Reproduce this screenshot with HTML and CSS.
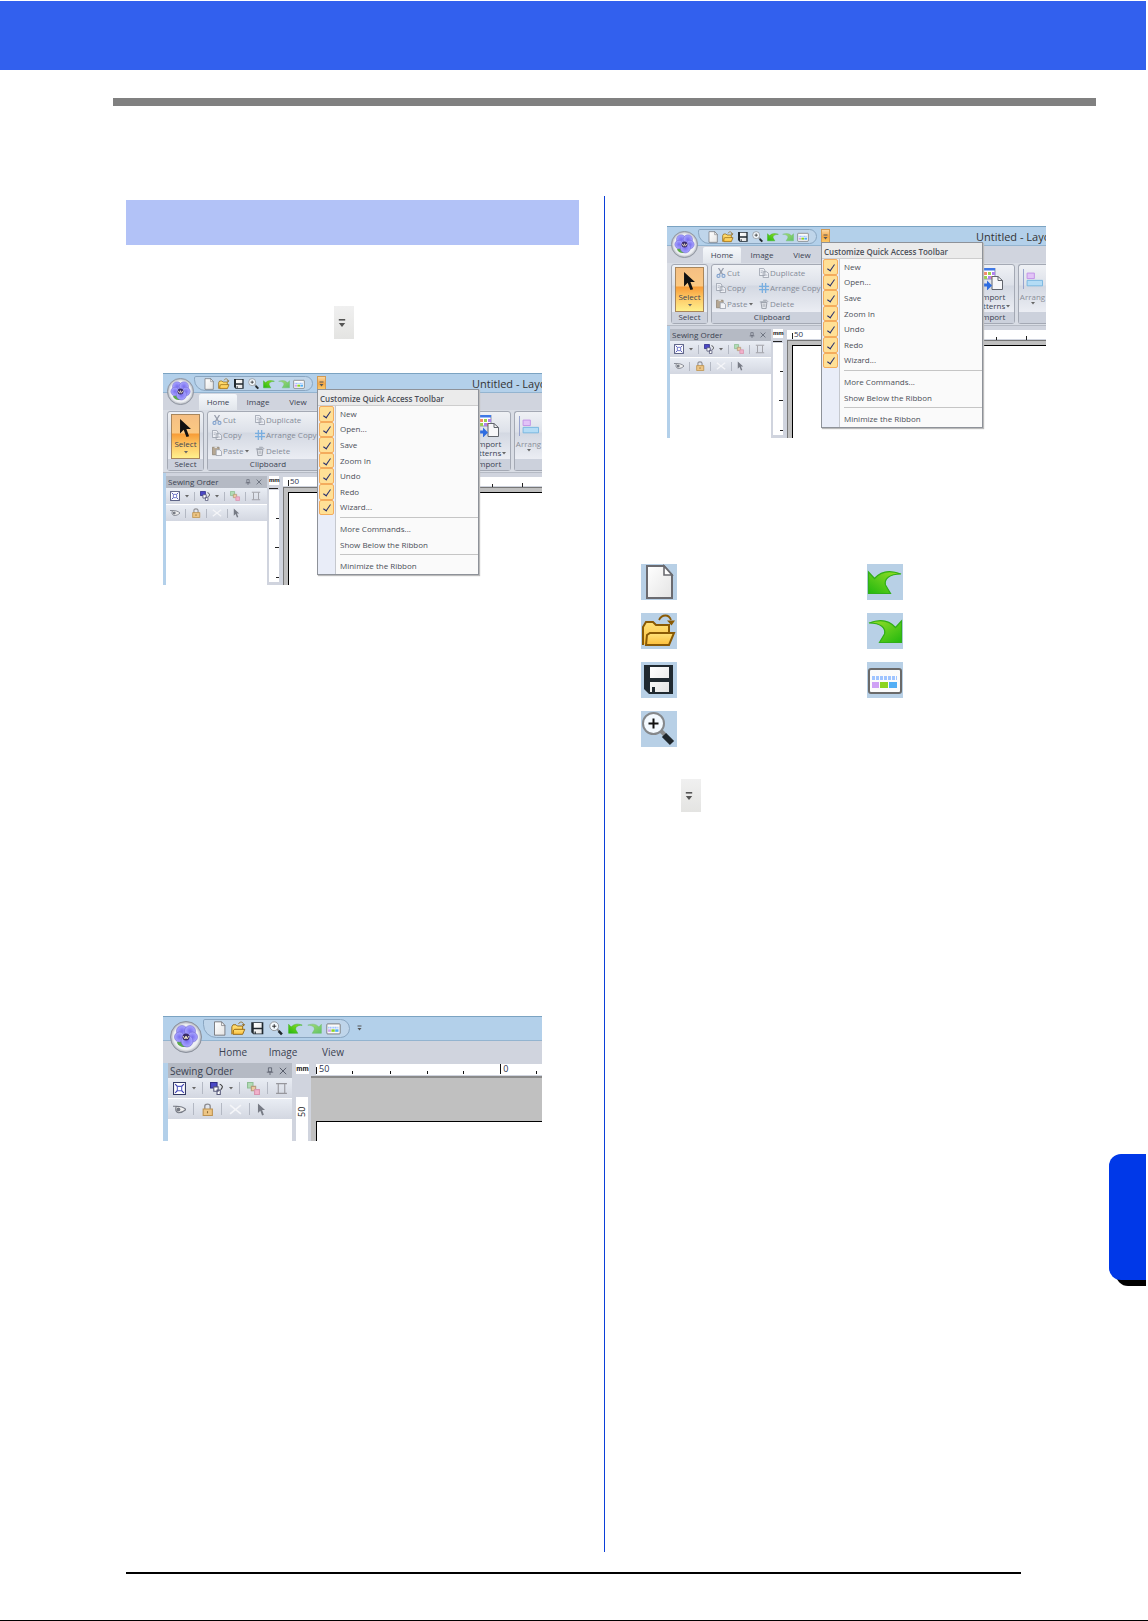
FILE: index.html
```
<!DOCTYPE html>
<html lang="en">
<head>
<meta charset="utf-8">
<title>Quick Access Toolbar</title>
<link rel="stylesheet" href="styles.css">
</head>
<body>
<svg class="defs" aria-hidden="true">
  <defs>
    <linearGradient id="g-doc" x1="0" y1="0" x2="1" y2="1"><stop offset="0" stop-color="#fff"/><stop offset="1" stop-color="#e4e4e4"/></linearGradient>
    <linearGradient id="g-fold" x1="0" y1="0" x2="0" y2="1"><stop offset="0" stop-color="#ffe27a"/><stop offset="1" stop-color="#fcbf3c"/></linearGradient>
    <linearGradient id="g-green" x1="0" y1="1" x2="1" y2="0"><stop offset="0" stop-color="#22b80e"/><stop offset="1" stop-color="#9be02a"/></linearGradient>
    <radialGradient id="g-orb"><stop offset="0" stop-color="#fff"/><stop offset=".8" stop-color="#eceef2"/><stop offset="1" stop-color="#a9adb5"/></radialGradient>
    <radialGradient id="g-petal"><stop offset="0" stop-color="#7a6ff0"/><stop offset="1" stop-color="#a9a6ff"/></radialGradient>
  </defs>
  <symbol id="new" viewBox="0 0 36 36"><path d="M6 2h17l8 9v23H6z" fill="url(#g-doc)" stroke="#6b6b70" stroke-width="2"/><path d="M23 2v9h8z" fill="#fff" stroke="#6b6b70" stroke-width="1.6"/></symbol>
  <symbol id="open" viewBox="0 0 36 36"><path d="M2 32V14l3-5h7l3 3h13v10" fill="url(#g-fold)" stroke="#8a5a05" stroke-width="2"/><path d="M5 32 6 22l3-2h24l-5 12z" fill="url(#g-fold)" stroke="#8a5a05" stroke-width="2"/><path d="M18 7c3-6 10-6 12 0" fill="none" stroke="#8a5a05" stroke-width="1.8"/><path d="M26 7.500h8l-3.500 5z" fill="#8a5a05"/></symbol>
  <symbol id="save" viewBox="0 0 36 36"><path d="M3 3h29v29H8l-5-5z" fill="#202930"/><path d="M9 5h19v11H9zM9 20h19v10H9z" fill="url(#g-doc)"/><path d="M11 25h3v6h-3z" fill="#202930"/></symbol>
  <symbol id="zoom" viewBox="0 0 36 36"><path d="m19 19 5 5" stroke="#8b8b8b" stroke-width="4"/><path d="m23 24 8 8" stroke="#20272c" stroke-width="6"/><circle cx="12.500" cy="12.500" r="10.500" fill="#f4faff" stroke="#85888b" stroke-width="2"/><path d="M12.500 7.500v10M7.500 12.500h10" stroke="#111" stroke-width="2"/></symbol>
  <symbol id="undo" viewBox="0 0 36 36"><path d="m1.500 8 6 6.500c6-7 15-9 26.500-4.500-12 0-17 5-15.500 11l5 8.500h-22z" fill="url(#g-green)" stroke="#31ae18" stroke-width="1.200"/></symbol>
  <symbol id="redo" viewBox="0 0 36 36"><path transform="matrix(-1 0 0 1 36 0)" d="m1.500 8 6 6.500c6-7 15-9 26.500-4.500-12 0-17 5-15.500 11l5 8.500h-22z" fill="url(#g-green)" stroke="#31ae18" stroke-width="1.200"/></symbol>
  <symbol id="wizard" viewBox="0 0 36 36"><rect x="2" y="7" width="32" height="24" rx="2" fill="#fbfbfb" stroke="#6a6a6a" stroke-width="2"/><path d="M5 16h25" stroke="#9fc4ff" stroke-width="4" stroke-dasharray="3 1"/><path d="M5 20h7v6H5z" fill="#cfa0f5"/><path d="M13 20h8v6h-8z" fill="#8cd420"/><path d="M22 20h8v6h-8z" fill="#52aef5"/></symbol>
  <symbol id="orb" viewBox="0 0 32 32"><circle cx="16" cy="16" r="15.500" fill="url(#g-orb)" stroke="#8b919c"/><path d="M7 21c1 5 7 6 12 4l-6-5z" fill="#5cab48"/><g fill="url(#g-petal)" stroke="#6558c8" stroke-width=".5"><circle cx="12" cy="10" r="5.500"/><circle cx="20" cy="10" r="5.500"/><circle cx="22.500" cy="16" r="5"/><circle cx="9.500" cy="16" r="5"/><circle cx="17" cy="20" r="6"/></g><circle cx="16" cy="16" r="3.500" fill="#382a66"/><path d="m13 15 2 3 1-3 1 3 2-3" fill="none" stroke="#e8dfc0"/></symbol>
  <symbol id="drop" viewBox="0 0 10 12"><path d="M1 2h8" stroke="#555" stroke-width="2"/><path d="M1 6h8l-4 5z" fill="#555"/></symbol>
  <symbol id="caret" viewBox="0 0 6 4"><path d="M1 1h4L3 3.500z" fill="#666"/></symbol>
  <symbol id="cursor" viewBox="0 0 14 22"><path d="M1 1v16l4-4 3 8 3-1-3-8h5z" fill="currentColor"/></symbol>
  <symbol id="cut" viewBox="0 0 12 12"><path d="m3 0 5 8M9 0 4 8" stroke="#969cab" stroke-width="1.500"/><g fill="none" stroke="#84a4cf" stroke-width="1.400"><circle cx="3" cy="9.500" r="1.800"/><circle cx="9" cy="9.500" r="1.800"/></g></symbol>
  <symbol id="copy" viewBox="0 0 12 12"><path d="M.5.5h5l1.500 2V9H.5zM5 4.500h4l2.500 2v5H5z" fill="#eef0f5" stroke="#979daa"/><path d="M2 3.500h3M2 5.500h2M7 8.500h3" stroke="#aab0bd"/></symbol>
  <symbol id="paste" viewBox="0 0 12 12"><path d="M.5 1.500h8v9h-8z" fill="#b6a793" stroke="#928777"/><path d="M3 .5h3v2H3z" fill="#ddd"/><path d="M5 4.500h4l2.500 2v5H5z" fill="#f2f3f7" stroke="#979daa"/></symbol>
  <symbol id="arrange" viewBox="0 0 12 12"><path d="M4 0v12M8 0v12M0 4h12M0 8h12" stroke="#78aee0" stroke-width="1.500"/></symbol>
  <symbol id="delete" viewBox="0 0 12 12"><path d="M2.500 4h7l-1 7.500h-5zM1 3.500h8M5 1.500h4l2 2" fill="#e6e8ed" stroke="#8f949f"/><path d="M5 5.500v4M7 5.500v4" stroke="#a5a9b2"/></symbol>
  <symbol id="pin" viewBox="0 0 10 10"><path d="M3 1h4v5H3zM1 6.500h8M5 7v3" fill="none" stroke="#555b68"/></symbol>
  <symbol id="close" viewBox="0 0 10 10"><path d="m1 1 8 8M9 1 1 9" stroke="#555b68" stroke-width="1.200"/></symbol>
  <symbol id="fit" viewBox="0 0 12 12"><path d="M.5.5h11v11H.5z" fill="#fff" stroke="#333a66"/><path d="m2 2 2 2M10 2 8 4M2 10l2-2M10 10 8 8" stroke="#3636ad"/><path d="M4 4h4v4H4z" fill="#fff" stroke="#555ec2"/></symbol>
  <symbol id="order" viewBox="0 0 12 12"><path d="M.5.500h6v5h-6z" fill="#4b48c6" stroke="#2f2d87"/><path d="M3.500 4.500h4v4h-4zM6.500 7.500h3v4h-3z" fill="#fff" stroke="#57597a"/><path d="M9 2c3 1 3 3 1 5" fill="none" stroke="#333"/></symbol>
  <symbol id="merge" viewBox="0 0 12 12"><path d="M.5.500h5v5h-5z" fill="#b1dcb5" stroke="#8fbe94"/><path d="M4 4h4v4H4z" fill="#ecc9a0" stroke="#b79b7c"/><path d="M7 7h4.500v4.500H7z" fill="#f2b1cb" stroke="#d795b0"/></symbol>
  <symbol id="spool" viewBox="0 0 12 12"><path d="M1 1.500h10M1 10.500h10M3 2v8M9 2v8" stroke="#96969c"/></symbol>
  <symbol id="eye" viewBox="0 0 12 12"><path d="M0 3h3c4 0 7 1 9 3-2 2-4 3-7 3-3-1-3-3-2-6" fill="#eee" stroke="#777b85"/><circle cx="5" cy="6" r="1.800" fill="#777b85"/></symbol>
  <symbol id="lock" viewBox="0 0 12 12"><path d="M3.500 6V3q0-2 2.500-2t2.500 2v3" fill="none" stroke="#8e8e92" stroke-width="1.300"/><path d="M2 5.500h8.500v6H2z" fill="#edc584" stroke="#bd9351"/><path d="M6 7.500v2" stroke="#8f6e39"/></symbol>
  <symbol id="snip" viewBox="0 0 12 12"><path d="m1 2 10 8M11 2 1 10" stroke="#f4f5f8" stroke-width="1.500"/></symbol>
  <symbol id="import" viewBox="0 0 20 22"><path d="M0 0h12v11H0z" fill="#fff" stroke="#8b93ad"/><path d="M0 0h12v2.500H0z" fill="#3f78e6"/><path d="M1 4h3v3H1zM8 8h3v3H8z" fill="#f58a6a"/><path d="M5 4h3v3H5zM1 8h3v3H1z" fill="#9bd04e"/><path d="M9 4h3v3H9zM5 8h3v3H5z" fill="#b081ec"/><path d="M9 8.500h6l4.500 4v9H9z" fill="#f7f7f9" stroke="#61656d"/><path d="M15 8.500v4h4.500" fill="none" stroke="#61656d"/><path d="M0 15.500h4v-3l5 5-5 5v-4H0z" fill="#2e6ce0"/></symbol>
  <symbol id="align" viewBox="0 0 22 22"><path d="M.5 0v22" stroke="#8c99c9"/><path d="M4.500 4.500h8v6h-8z" fill="#e2c3f7" stroke="#c190e6"/><path d="M4.500 12.500h17v6h-17z" fill="#b4dcf5" stroke="#74b4df"/></symbol>
</svg>

<header class="banner"></header>
<div class="rule"></div>

<main class="page">
  <section class="column column-left">
    <div class="heading"></div>
    <button class="more more-first" aria-label="Customize"><svg><use href="#drop"/></svg></button>
    <div class="shot" data-window></div>

    <div class="shot shot-large">
      <div class="titlebar">
        <span class="orb"><svg><use href="#orb"/></svg></span>
        <div class="quick"><svg><use href="#new"/></svg><svg><use href="#open"/></svg><svg><use href="#save"/></svg><svg><use href="#zoom"/></svg><svg><use href="#undo"/></svg><svg class="faded"><use href="#redo"/></svg><svg><use href="#wizard"/></svg></div>
        <button class="customize plain" aria-label="Customize"><svg><use href="#drop"/></svg></button>
      </div>
      <nav class="tabs"><button>Home</button><button>Image</button><button>View</button></nav>
      <div class="work">
        <div class="panel">
          <div class="panel-head"><span>Sewing Order</span><svg><use href="#pin"/></svg><svg><use href="#close"/></svg></div>
          <div class="tools"><svg><use href="#fit"/></svg><svg class="caret"><use href="#caret"/></svg><i></i><svg><use href="#order"/></svg><svg class="caret"><use href="#caret"/></svg><i></i><svg><use href="#merge"/></svg><i></i><svg><use href="#spool"/></svg></div>
          <div class="tools"><svg><use href="#eye"/></svg><i></i><svg><use href="#lock"/></svg><i></i><svg><use href="#snip"/></svg><i></i><svg class="pointer"><use href="#cursor"/></svg></div>
        </div>
        <div class="side-ruler"><b>mm</b><span class="scale">50</span></div>
        <div class="stage">
          <div class="ruler"><span>50</span><span class="zero">0</span><svg class="ticks"><path d="M.5 3v7M36.500 7v3M74.500 7v3M111.500 7v3M147.500 7v3M220.500 7v3M184.500 0v10" stroke="#111"/></svg></div>
          <div class="canvas"><div class="paper"></div></div>
        </div>
      </div>
    </div>
  </section>

  <section class="column column-right">
    <div class="shot" data-window></div>
    <div class="icon-grid">
      <span class="tile"><svg><use href="#new"/></svg></span><span class="tile"><svg><use href="#undo"/></svg></span>
      <span class="tile"><svg><use href="#open"/></svg></span><span class="tile"><svg><use href="#redo"/></svg></span>
      <span class="tile"><svg><use href="#save"/></svg></span><span class="tile"><svg><use href="#wizard"/></svg></span>
      <span class="tile"><svg><use href="#zoom"/></svg></span>
    </div>
    <button class="more more-second" aria-label="Customize"><svg><use href="#drop"/></svg></button>
  </section>
</main>
<footer class="footer"></footer>
<div class="side-tab"></div>

<template id="window">
  <div class="titlebar">
    <span class="orb"><svg><use href="#orb"/></svg></span>
    <div class="quick"><svg><use href="#new"/></svg><svg><use href="#open"/></svg><svg><use href="#save"/></svg><svg><use href="#zoom"/></svg><svg><use href="#undo"/></svg><svg class="faded"><use href="#redo"/></svg><svg><use href="#wizard"/></svg></div>
    <button class="customize" aria-label="Customize"><svg><use href="#drop"/></svg></button>
    <span class="title">Untitled - Layo</span>
  </div>
  <nav class="tabs"><button class="active">Home</button><button>Image</button><button>View</button></nav>
  <div class="ribbon">
    <div class="group group-select">
      <button class="select"><svg class="arrow"><use href="#cursor"/></svg><span>Select</span><svg class="caret"><use href="#caret"/></svg></button>
      <div class="caption">Select</div>
    </div>
    <div class="group group-clip">
      <div class="commands">
        <button><svg><use href="#cut"/></svg>Cut</button><button><svg><use href="#copy"/></svg>Duplicate</button>
        <button><svg><use href="#copy"/></svg>Copy</button><button><svg><use href="#arrange"/></svg>Arrange Copy</button>
        <button><svg><use href="#paste"/></svg>Paste<svg class="caret"><use href="#caret"/></svg></button><button><svg><use href="#delete"/></svg>Delete</button>
      </div>
      <div class="caption">Clipboard</div>
    </div>
    <div class="group group-import">
      <button class="tall"><svg><use href="#import"/></svg><span>Import</span><span>Patterns<svg class="caret"><use href="#caret"/></svg></span></button>
      <div class="caption">Import</div>
    </div>
    <div class="group group-arrange">
      <button class="tall"><svg><use href="#align"/></svg><span>Arrang</span><svg class="caret"><use href="#caret"/></svg></button>
      <div class="caption"></div>
    </div>
  </div>
  <div class="work">
    <div class="panel">
      <div class="panel-head"><span>Sewing Order</span><svg><use href="#pin"/></svg><svg><use href="#close"/></svg></div>
      <div class="tools"><svg><use href="#fit"/></svg><svg class="caret"><use href="#caret"/></svg><i></i><svg><use href="#order"/></svg><svg class="caret"><use href="#caret"/></svg><i></i><svg><use href="#merge"/></svg><i></i><svg><use href="#spool"/></svg></div>
      <div class="tools"><svg><use href="#eye"/></svg><i></i><svg><use href="#lock"/></svg><i></i><svg><use href="#snip"/></svg><i></i><svg class="pointer"><use href="#cursor"/></svg></div>
    </div>
    <div class="side-ruler"><b>mm</b><svg class="marks"><path d="M0 3.500h9M7 33.500h3M6 62.500h4M7 92.500h3" stroke="#222"/></svg></div>
    <div class="stage">
      <div class="ruler"><span>50</span><svg class="ticks"><path d="M5.500 3v6M209.500 7v3M239.500 6v4" stroke="#222"/></svg></div>
      <div class="canvas"><div class="paper"></div></div>
    </div>
  </div>
  <div class="menu">
    <div class="menu-head">Customize Quick Access Toolbar</div>
    <label><input type="checkbox" checked>New</label>
    <label><input type="checkbox" checked>Open...</label>
    <label><input type="checkbox" checked>Save</label>
    <label><input type="checkbox" checked>Zoom In</label>
    <label><input type="checkbox" checked>Undo</label>
    <label><input type="checkbox" checked>Redo</label>
    <label><input type="checkbox" checked>Wizard...</label>
    <hr>
    <button>More Commands...</button>
    <button>Show Below the Ribbon</button>
    <hr>
    <button>Minimize the Ribbon</button>
  </div>
</template>
<script src="app.js"></script>
</body>
</html>
```
FILE: styles.css
```
* { box-sizing: border-box; }
body {
  margin: 0;
  min-height: 100vh;
  display: flex;
  flex-direction: column;
  position: relative;
  background: #fff;
  font-family: "Open Sans", "Noto Sans", sans-serif;
  overflow-x: hidden;
}
button { margin: 0; padding: 0; border: 0; background: none; font: inherit; color: inherit; }
svg { display: block; flex: none; }
.defs { position: absolute; width: 0; height: 0; }

.banner { height: 69px; margin: 1px 2px 0 0; background: #3260ee; }
.rule { height: 8px; margin: 28px 52px 0 113px; background: #808080; }
.page {
  flex: 1;
  display: grid;
  grid-template-columns: 453px minmax(0, 1fr);
  column-gap: 25px;
  margin: 90px 51px 0 126px;
}
.column { display: flex; flex-direction: column; align-items: flex-start; padding-top: 4px; }
.column-left .shot { margin-left: 37px; }
.column-right { border-left: 1px solid #0b3fd8; padding: 30px 0 0 36px; }
.column-right .shot { margin-left: 26px; }
.heading { width: 100%; height: 45px; background: #b2c2f7; }
.footer { margin-top: 20px; padding-left: 126px; padding-right: 127px; height: 49px; border-bottom: 1px solid #000; }
.footer::before { content: ""; display: block; height: 2px; background: #000; }

.more {
  width: 20px;
  height: 33px;
  padding: 0 4px;
  display: grid;
  align-items: center;
  background: linear-gradient(#f0f0f0, #e4e4e2);
}
.more svg { width: 8px; height: 10px; }
.more-first { margin: 61px 0 34px 208px; }
.more-second { margin: 32px 0 0 40px; }

.icon-grid {
  display: grid;
  grid-template-columns: 36px 36px;
  column-gap: 190px;
  row-gap: 13px;
  margin-top: 126px;
}
.tile { background: #b8d0e6; }
.tile svg { width: 36px; height: 36px; }

.side-tab {
  position: absolute;
  right: 2px;
  top: 1154px;
  width: 37px;
  height: 126px;
  border-radius: 12px 0 0 12px;
  background: #0038e8;
}
.side-tab::before {
  content: "";
  position: absolute;
  z-index: -1;
  inset: 6px 0 -6px 7px;
  border-radius: 12px 0 0 12px;
  background: #000;
}

/* Application window */
.shot {
  position: relative;
  display: flex;
  flex-direction: column;
  width: 379px;
  height: 212px;
  overflow: hidden;
  background: #d0d4de;
  color: #3b4252;
  font-size: 8px;
  line-height: 12px;
  white-space: nowrap;
}
.titlebar {
  display: flex;
  flex: none;
  height: 20px;
  padding: 2px 0 0 31px;
  background: #b3d0ea;
  border-top: 1px solid #7ba3c2;
  border-bottom: 1px solid #93b4d0;
}
.titlebar > * { flex: none; }
.orb { position: absolute; left: 4px; top: 5px; z-index: 1; }
.orb svg { width: 27px; height: 27px; }
.quick {
  display: flex;
  align-items: center;
  gap: 3px;
  width: 119px;
  height: 15px;
  padding-left: 8px;
  border: 1px solid #8aa6c1;
  border-radius: 2px 8px 8px 12px;
  background: #bfd5ea;
}
.quick svg { width: 12px; height: 12px; }
.faded { opacity: .6; }
.customize {
  width: 9px;
  height: 15px;
  margin-left: 4px;
  display: grid;
  place-items: center;
  border: 1px solid #d09a55;
  background: linear-gradient(#fad6a0, #f4a845 50%, #fbd070);
}
.customize svg { width: 5px; height: 6px; }
.title { margin-left: 146px; font-size: 11px; line-height: 16px; color: #333; }

.tabs { display: flex; flex: none; height: 17px; padding: 1px 0 0 36px; font-size: 8px; }
.tabs button { width: 38px; margin-right: 2px; border-radius: 2px 2px 0 0; }
.tabs .active { background: linear-gradient(#f5f8fb, #e2e6ec); }

.ribbon { display: flex; flex: none; gap: 3px; height: 63px; padding: 1px 0 1px 4px; background: #d9dde5; border-bottom: 1px solid #b5bac4; }
.group {
  flex: none;
  display: flex;
  flex-direction: column;
  border: 1px solid #a4a9b4;
  border-radius: 3px;
  background: linear-gradient(#eff1f5, #dde1e9 20px, #d3d8e2 21px, #eceef4 48px);
}
.caption { height: 11px; margin-top: auto; background: #ccd1dc; text-align: center; line-height: 10px; }
.group-select { width: 37px; }
.group-clip { width: 256px; }
.group-clip .caption { padding-right: 134px; }
.group-import { width: 45px; }
.group-arrange { flex: 1; border-right: 0; border-radius: 3px 0 0 3px; color: #8b8f99; }
.select {
  height: 46px;
  margin: 2px 3px 0;
  display: flex;
  flex-direction: column;
  align-items: center;
  border: 1px solid #a8865c;
  background: linear-gradient(#f5bf83, #fbc983 18px, #f79c36 19px, #fec866 30px, #fff08c);
}
.arrow { width: 13px; height: 20px; margin: 3px 0 0; color: #111; }
.caret { width: 6px; height: 4px; }
.commands {
  display: grid;
  grid-template-columns: 43px 80px;
  grid-template-rows: 15px 16px 15px;
  padding: 0 0 0 4px;
  color: #858b98;
}
.commands button { display: flex; align-items: center; gap: 1px; }
.commands svg { width: 10px; height: 10px; }
.commands .caret { width: 6px; height: 4px; }
.tall { display: flex; flex-direction: column; align-items: center; padding-top: 3px; line-height: 9px; }
.tall > svg { width: 20px; height: 22px; margin-bottom: 2px; }
.tall > .caret { width: 6px; height: 4px; }
.tall span { display: flex; align-items: center; }

.work { flex: 1; display: flex; min-height: 0; border-left: 3px solid #b3d0ea; }
.panel { width: 101px; margin-top: 3px; background: #fff; }
.panel-head { display: flex; align-items: center; height: 12px; padding: 0 5px 0 2px; background: #b5bac4; gap: 5px; }
.panel-head span { flex: 1; }
.panel-head svg { width: 6px; height: 6px; }
.tools { display: flex; align-items: center; gap: 5px; height: 17px; padding-left: 4px; background: linear-gradient(#e9edf4, #d3d7e1); border-bottom: 1px solid #fff; }
.tools svg { width: 10px; height: 10px; }
.tools .caret { width: 6px; height: 4px; margin: 0 -1px; }
.tools i { width: 1px; height: 9px; background: #b3b8c3; }
.tools .pointer { color: #777b85; width: 7px; }
.side-ruler { width: 14px; padding: 3px 2px 0 2px; }
.side-ruler b { display: block; height: 9px; background: #fff; font: bold 6px/9px "Liberation Sans", Arial, sans-serif; text-align: center; color: #111; }
.marks { width: 10px; height: 97px; background: linear-gradient(#d0d4de 5px, #fff 5px); }
.stage { flex: 1; min-width: 0; display: flex; flex-direction: column; padding: 4px 0 0 2px; }
.ruler { position: relative; height: 9px; background: #fff; line-height: 7px; padding-left: 7px; color: #2d3350; }
.ticks { position: absolute; left: 0; top: 0; width: 100%; height: 10px; }
.canvas { flex: 1; margin-top: 1px; padding: 4px 0 0 4px; background: #c0c0c0; border: solid #777; border-width: 1px 0 0 1px; }
.paper { height: 100%; background: #fff; border: solid #000; border-width: 1px 0 0 1px; }

.menu {
  position: absolute;
  left: 154px;
  top: 16px;
  width: 162px;
  height: 186px;
  display: flex;
  flex-direction: column;
  border: 1px solid #8e9299;
  background: linear-gradient(90deg, #e9edf8 17px, #c5c8ce 17px, #c5c8ce 18px, #fafafa 18px);
  box-shadow: 1px 1px 1px #bbb;
  color: #4b4f58;
}
.menu-head { height: 16px; padding-left: 2px; background: #ebebeb; border-bottom: 1px solid #cdcdcd; line-height: 18px; font-weight: 600; }
.menu label, .menu > button { flex: 1; display: flex; align-items: center; text-align: left; min-height: 0; }
.menu > button { padding-left: 22px; }
.menu input {
  appearance: none;
  width: 15px;
  height: 100%;
  margin: 0 6px 0 1px;
  border: 1px solid #f4ac5c;
  border-radius: 2px;
  background: #ffe096;
  display: grid;
  place-items: center;
}
.menu input::before { content: ""; width: 3px; height: 7px; border: solid #27306e; border-width: 0 1px 1px 0; transform: rotate(35deg); }
.menu hr { width: 138px; height: 1px; margin: 2px 0 3px 22px; border: 0; background: #c5c5c5; }

/* Larger window with the ribbon minimized */
.shot-large { height: 125px; margin-top: 431px; font-size: 10px; }
.shot-large .titlebar { height: 25px; padding-left: 40px; }
.shot-large .orb { left: 7px; top: 5px; }
.shot-large .orb svg { width: 32px; height: 32px; }
.shot-large .quick { width: 147px; height: 19px; gap: 4px; padding-left: 8px; border-radius: 2px 10px 10px 14px; }
.shot-large .quick svg { width: 15px; height: 15px; }
.titlebar .plain { border: 0; background: none; margin-left: 5px; height: 18px; }
.shot-large .tabs { height: 22px; padding: 0 0 0 46px; font-size: 10px; }
.shot-large .tabs button { width: 48px; }
.shot-large .work { border-left-width: 5px; }
.shot-large .panel { width: 124px; margin-top: 0; }
.shot-large .panel-head { height: 15px; }
.shot-large .panel-head svg { width: 8px; height: 8px; }
.shot-large .tools { height: 21px; gap: 7px; padding-left: 5px; }
.shot-large .tools svg { width: 13px; height: 13px; }
.shot-large .tools .caret { width: 6px; height: 4px; margin: 0 -2px; }
.shot-large .tools .pointer { width: 9px; }
.shot-large .tools i { height: 12px; }
.shot-large .side-ruler { width: 18px; padding: 1px 0 0 4px; }
.shot-large .side-ruler b { width: 13px; height: 10px; font-size: 7px; }
.scale { display: block; width: 12px; height: 44px; margin-top: 23px; background: #fff; font-size: 9px; writing-mode: vertical-rl; transform: rotate(180deg); text-align: right; padding-bottom: 10px; line-height: 12px; color: #222; }
.shot-large .stage { padding: 1px 0 0 1px; }
.shot-large .ruler { height: 11px; display: flex; margin-left: 5px; padding-left: 3px; line-height: 9px; font-size: 9px; }
.zero { margin-left: 174px; }
.shot-large .canvas { border-color: #8a8a8a; border-width: 2px 0 0; padding: 43px 0 0 5px; }
```
FILE: app.js
```
// The same application window appears in both columns.
const source = document.getElementById("window");
document.querySelectorAll("[data-window]").forEach((host) => {
  host.append(source.content.cloneNode(true));
});
```
